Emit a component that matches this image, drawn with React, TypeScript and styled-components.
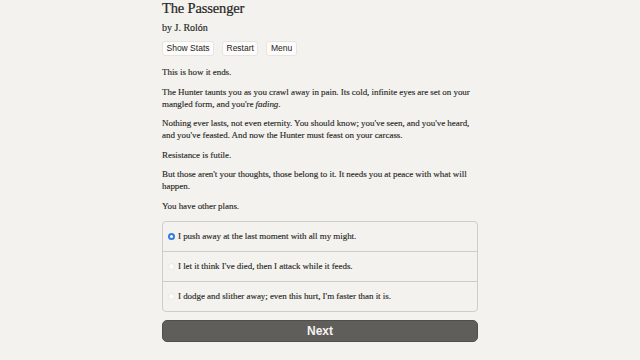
import { useState } from 'react';
import styled, { createGlobalStyle } from 'styled-components';

const GlobalStyle = createGlobalStyle`
  html, body {
    margin: 0;
    padding: 0;
    background: #f3f2ee;
  }
  body {
    font-family: "Liberation Serif", serif;
    color: #262522;
  }
`;

const choices = [
  "I push away at the last moment with all my might.",
  "I let it think I've died, then I attack while it feeds.",
  "I dodge and slither away; even this hurt, I'm faster than it is.",
];

function App() {
  const [picked, setPicked] = useState(0);
  return (
    <Page>
      <GlobalStyle />
      <Column>
        <Title>The Passenger</Title>
        <Author>by J. Rolón</Author>
        <Toolbar>
          <ToolButton>Show Stats</ToolButton>
          <ToolButton>Restart</ToolButton>
          <ToolButton>Menu</ToolButton>
        </Toolbar>
        <Story>
          <p>This is how it ends.</p>
          <p>
            The Hunter taunts you as you crawl away in pain. Its cold, infinite eyes are set on your
            mangled form, and you're <em>fading</em>.
          </p>
          <p>
            Nothing ever lasts, not even eternity. You should know; you've seen, and you've heard,
            and you've feasted. And now the Hunter must feast on your carcass.
          </p>
          <p>Resistance is futile.</p>
          <p>
            But those aren't your thoughts, those belong to it. It needs you at peace with what will
            happen.
          </p>
          <p>You have other plans.</p>
        </Story>
        <Choices>
          {choices.map((text, key) => (
            <Choice key={key} onClick={() => setPicked(key)}>
              <Radio $on={picked === key} />
              <span>{text}</span>
            </Choice>
          ))}
        </Choices>
        <NextButton>Next</NextButton>
      </Column>
    </Page>
  );
}

const Page = styled.div`
  display: flex;
  justify-content: center;
  width: 100%;
  min-height: 360px;
`;
const Column = styled.div`
  width: 316px;
  display: flex;
  flex-direction: column;
`;
const Title = styled.h1`
  font-size: 14.5px;
  font-weight: normal;
  letter-spacing: -0.15px;
  -webkit-text-stroke: 0.2px;
  margin: 0;
  line-height: 16px;
`;
const Author = styled.h2`
  font-size: 10px;
  font-weight: normal;
  -webkit-text-stroke: 0.15px;
  margin: 0;
  margin-top: 5px;
  line-height: 14px;
`;
const Toolbar = styled.div`
  display: flex;
  gap: 8px;
  margin-top: 6px;
`;
const ToolButton = styled.button`
  font-family: "Liberation Sans", Arial, sans-serif;
  font-size: 8.5px;
  color: #222;
  background: #fdfcfb;
  border: 1px solid #e6e4df;
  border-radius: 3px;
  padding: 0 3.5px;
  height: 15px;
  line-height: 13px;
`;
const Story = styled.div`
  margin-top: 10px;
  p {
    font-size: 9px;
    letter-spacing: -0.05px;
    -webkit-text-stroke: 0.12px;
    line-height: 12px;
    margin: 0 0 7.5px 0;
  }
`;
const Choices = styled.div`
  border: 1px solid #cfcdc8;
  border-radius: 4px;
  margin-top: 1.5px;
  display: flex;
  flex-direction: column;
`;
const Choice = styled.label`
  display: flex;
  align-items: center;
  height: 29px;
  padding-left: 5px;
  font-size: 9px;
  letter-spacing: -0.05px;
  -webkit-text-stroke: 0.12px;
  border-bottom: 1px solid #cfcdc8;
  cursor: pointer;
  &:last-child {
    border-bottom: none;
  }
`;
const Radio = styled.span<{ $on: boolean }>`
  flex-shrink: 0;
  width: 7px;
  height: 7px;
  border-radius: 50%;
  margin-right: 3px;
  box-sizing: border-box;
  -webkit-text-stroke: 0;
  background: ${p => (p.$on ? '#fff' : '#fcfcfb')};
  border: ${p => (p.$on ? '2px solid #2f7de1' : '1px solid #e9e7e3')};
`;
const NextButton = styled.button`
  margin-top: 8px;
  height: 22px;
  box-sizing: border-box;
  background: #5f5e5b;
  color: #f4f3f0;
  border: 1px solid #4f4e4b;
  border-radius: 5px;
  font-family: "Liberation Sans", Arial, sans-serif;
  font-weight: bold;
  font-size: 12px;
`;

export default App;
